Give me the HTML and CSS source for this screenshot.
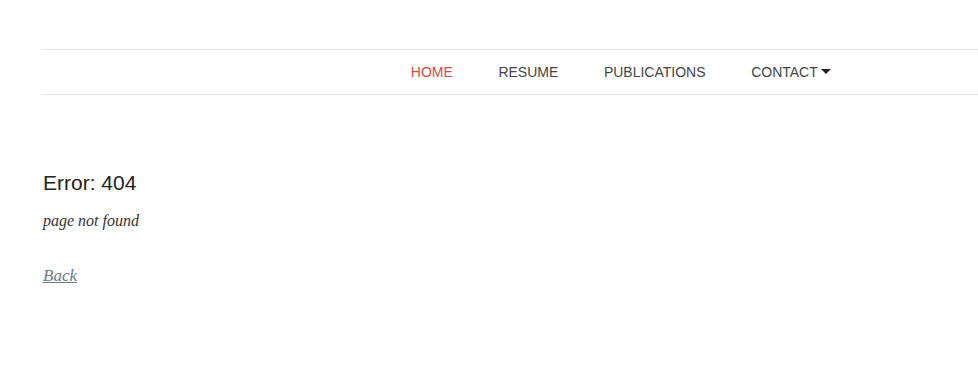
FILE: index.html
```html
<!DOCTYPE html>
<html lang="en">
<head>
  <meta charset="UTF-8">
  <title>Error 404</title>
  <link rel="stylesheet" href="styles.css">
</head>
<body>

  <div class="page">
    <!-- Top navigation -->
    <nav class="navbar">
      <ul class="menu">
        <li><a class="active" href="#">HOME</a></li>
        <li><a href="#">RESUME</a></li>
        <li><a href="#">PUBLICATIONS</a></li>
        <li><a href="#">CONTACT<span class="caret"></span></a></li>
      </ul>
    </nav>

    <div class="content">
      <h2>Error: 404</h2>
      <p class="msg">page not found</p>
      <a class="back" href="#">Back</a>
    </div>
  </div>

</body>
</html>
```

FILE: styles.css
```css
body { margin: 0; font-family: "Liberation Sans", Arial, sans-serif; color: #222; background: #fff; }
.page { padding: 49px 0 0 43px; }
.navbar { border-top: 1px solid #e5e5e5; border-bottom: 1px solid #e5e5e5; height: 44px; display: flex; align-items: center; }
.menu { list-style: none; margin: 0; padding: 0 0 0 345px; display: flex; }
.menu li a { display: block; padding: 0 22.8px; font-size: 14px; color: #444; text-decoration: none; line-height: 44px; }
.menu li a.active { color: #cf4a44; }
.caret { display: inline-block; width: 0; height: 0; margin-left: 3px; vertical-align: 3px; border-left: 5px solid transparent; border-right: 5px solid transparent; border-top: 5px solid #222; }
.content { padding-top: 75px; }
.content h2 { margin: 0; font-size: 21px; font-weight: normal; color: #222; line-height: 26px; }
.msg { margin: 16px 0 0; font-family: "Liberation Serif", "Times New Roman", serif; font-style: italic; font-size: 16px; color: #333; }
.back { display: inline-block; margin-top: 36px; font-family: "Liberation Serif", "Times New Roman", serif; font-style: italic; font-size: 17px; color: #6a7a88; }
```
